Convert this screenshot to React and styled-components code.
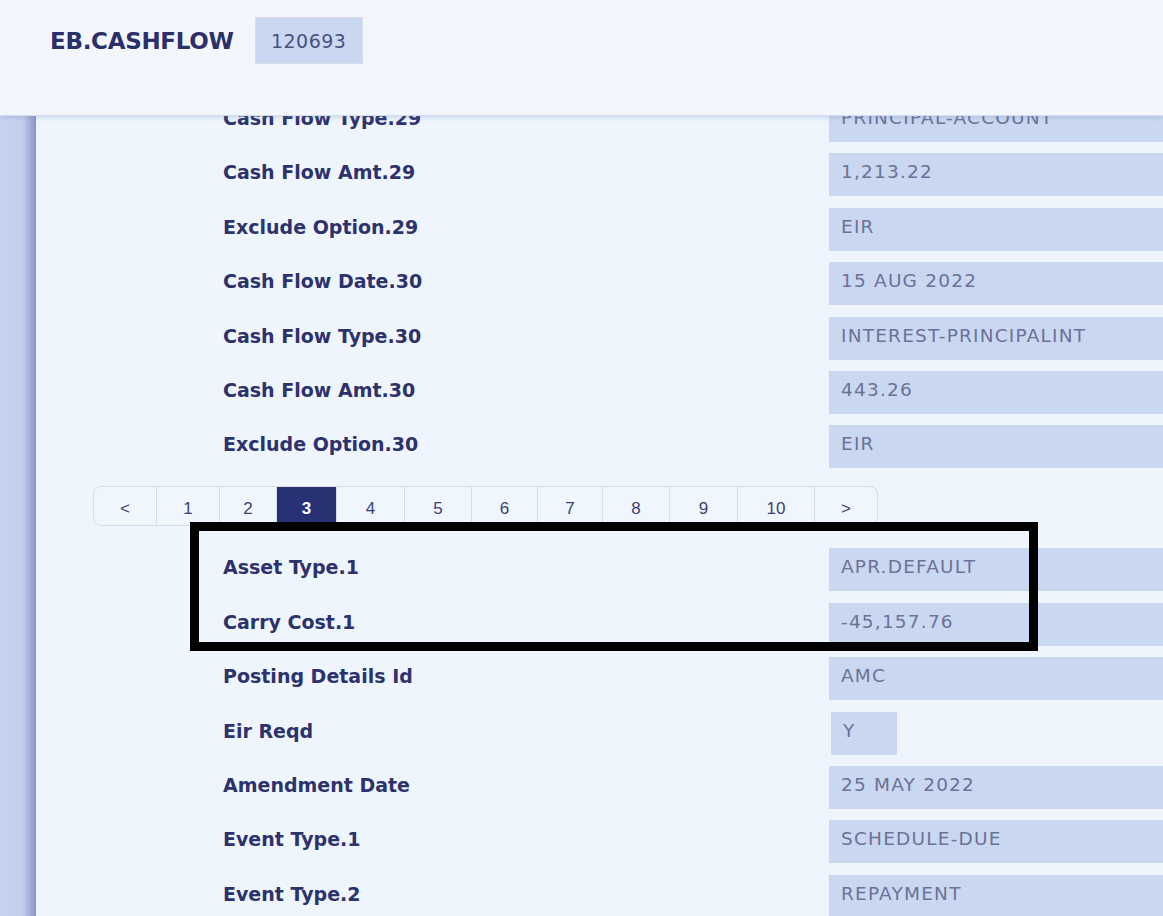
import React from 'react';
import styled, { createGlobalStyle } from 'styled-components';

const GlobalStyle = createGlobalStyle`
    html, body {
        margin: 0;
        padding: 0;
        background: #eef5fd;
    }
    * {
        box-sizing: border-box;
    }
`;

const Page = styled.div`
    width: 1163px;
    height: 916px;
    overflow: hidden;
    display: flex;
    flex-direction: column;
    font-family: "DejaVu Sans", "Noto Sans", sans-serif;
    background: #eef5fd;
`;

const Header = styled.header`
    position: relative;
    z-index: 2;
    flex: 0 0 116px;
    display: flex;
    align-items: flex-start;
    gap: 21px;
    padding: 17px 0 0 50px;
    background: #f3f7fd;
    border-bottom: 1px solid #d3ddf0;
    box-shadow: 0 2px 4px rgba(120, 140, 190, 0.25);
`;

const Title = styled.h1`
    margin: 0;
    height: 47px;
    display: flex;
    align-items: center;
    font-size: 23px;
    font-weight: 700;
    letter-spacing: -0.3px;
    color: #2b306b;
`;

const Badge = styled.span`
    display: flex;
    align-items: center;
    justify-content: center;
    width: 108px;
    height: 47px;
    background: #c9d8f0;
    border: 1px solid #d8dce6;
    font-size: 19px;
    letter-spacing: 0.5px;
    color: #4a5083;
`;

const Body = styled.div`
    flex: 1;
    display: flex;
    min-height: 0;
`;

const SideStrip = styled.div`
    flex: 0 0 36px;
    background: linear-gradient(90deg, #c6d4ef 0%, #c2d0ec 62%, #a9b5dc 80%, #8a93c3 100%);
`;

const Main = styled.main`
    position: relative;
    flex: 1;
    min-width: 0;
    background: #eef5fd;
`;

const Content = styled.div`
    margin-top: -17px;
    display: flex;
    flex-direction: column;
`;

const FieldList = styled.div`
    display: flex;
    flex-direction: column;
    gap: 11.4px;
`;

const Row = styled.div`
    display: grid;
    grid-template-columns: 606px 1fr;
    padding-left: 187px;
    height: 43px;
`;

const Label = styled.div`
    padding-top: 8px;
    font-size: 19px;
    font-weight: 700;
    letter-spacing: 0;
    color: #2d326c;
    white-space: nowrap;
`;

const Value = styled.div`
    height: 43px;
    width: ${p => (p.$short ? '66px' : 'auto')};
    margin-left: ${p => (p.$short ? '2px' : '0')};
    padding: 8px 12px 0;
    background: #c9d8f0;
    font-size: 18.5px;
    letter-spacing: 1.2px;
    color: #6c7198;
    white-space: nowrap;
`;

const Pager = styled.nav`
    display: flex;
    align-self: flex-start;
    margin: 18px 0 22px 57px;
    height: 40px;
`;

const PageButton = styled.button`
    width: ${p => p.$w}px;
    height: 40px;
    padding: 6px 0 0;
    margin: 0;
    border: 1px solid #d9dbe2;
    border-left-width: ${p => (p.$first ? '1px' : '0')};
    border-radius: ${p => (p.$first ? '8px 0 0 8px' : p.$last ? '0 8px 8px 0' : '0')};
    background: ${p => (p.$active ? '#273173' : '#f0f6fd')};
    color: ${p => (p.$active ? '#ffffff' : '#3b4172')};
    font-family: "Liberation Sans", Arial, sans-serif;
    font-size: 17px;
    font-weight: ${p => (p.$active ? 700 : 400)};
`;

const Highlight = styled.div`
    position: absolute;
    left: 154px;
    top: 406px;
    width: 848px;
    height: 129px;
    border: 9px solid #000;
    pointer-events: none;
`;

const topRows = [
    ['Cash Flow Type.29', 'PRINCIPAL-ACCOUNT'],
    ['Cash Flow Amt.29', '1,213.22'],
    ['Exclude Option.29', 'EIR'],
    ['Cash Flow Date.30', '15 AUG 2022'],
    ['Cash Flow Type.30', 'INTEREST-PRINCIPALINT'],
    ['Cash Flow Amt.30', '443.26'],
    ['Exclude Option.30', 'EIR'],
];

const bottomRows = [
    ['Asset Type.1', 'APR.DEFAULT'],
    ['Carry Cost.1', '-45,157.76'],
    ['Posting Details Id', 'AMC'],
    ['Eir Reqd', 'Y', true],
    ['Amendment Date', '25 MAY 2022'],
    ['Event Type.1', 'SCHEDULE-DUE'],
    ['Event Type.2', 'REPAYMENT'],
];

const pages = [
    ['<', 64], ['1', 63], ['2', 57], ['3', 60], ['4', 68], ['5', 67],
    ['6', 66], ['7', 65], ['8', 67], ['9', 68], ['10', 77], ['>', 63],
];

const Fields = ({ rows }) => (
    <FieldList>
        {rows.map(([label, value, short]) => (
            <Row key={label}>
                <Label>{label}</Label>
                <Value $short={short}>{value}</Value>
            </Row>
        ))}
    </FieldList>
);

const App = () => {
    return (
        <>
            <GlobalStyle />
            <Page>
                <Header>
                    <Title>EB.CASHFLOW</Title>
                    <Badge>120693</Badge>
                </Header>
                <Body>
                    <SideStrip />
                    <Main>
                        <Content>
                            <Fields rows={topRows} />
                            <Pager>
                                {pages.map(([text, w], i) => (
                                    <PageButton
                                        key={text}
                                        $w={w}
                                        $first={i === 0}
                                        $last={i === pages.length - 1}
                                        $active={text === '3'}
                                    >
                                        {text}
                                    </PageButton>
                                ))}
                            </Pager>
                            <Fields rows={bottomRows} />
                        </Content>
                        <Highlight />
                    </Main>
                </Body>
            </Page>
        </>
    );
};

export default App;
